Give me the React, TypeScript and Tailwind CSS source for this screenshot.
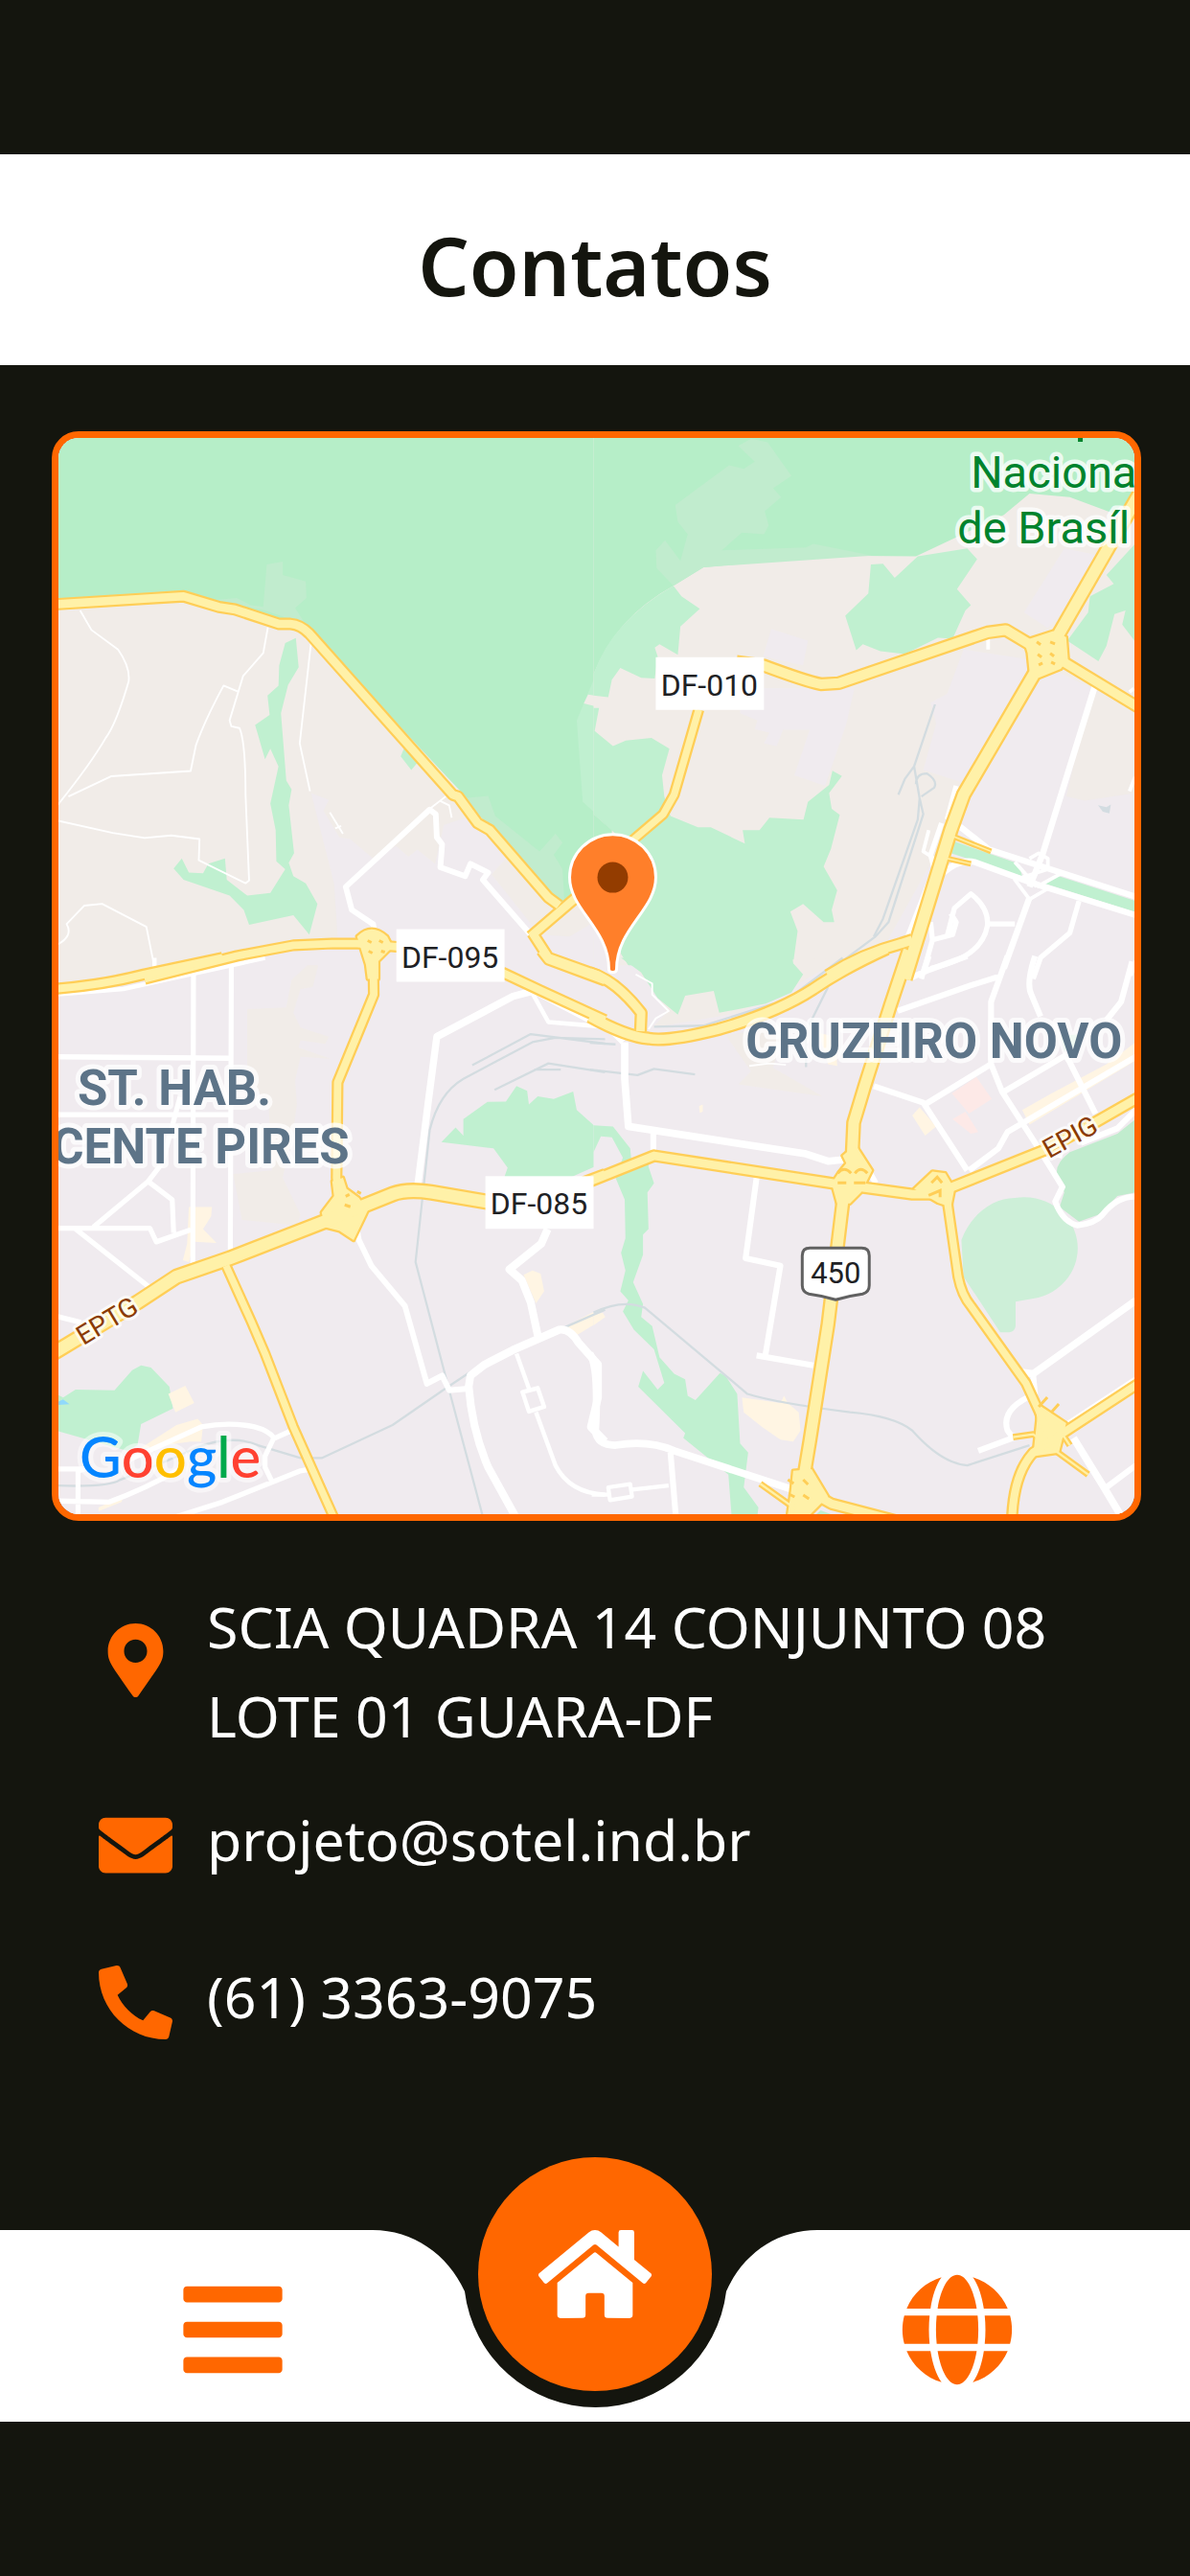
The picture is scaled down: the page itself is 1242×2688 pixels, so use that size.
import { FaBars, FaEnvelope, FaGlobe, FaHome, FaMapMarkerAlt, FaPhone } from "react-icons/fa";

type Shape = [string, string];
type Line = [number, string];

interface Tile {
    transform: string;
    areas: Shape[];
    rails: string;
    streets: Line[];
    roads: Line[];
    hubs: string;
}

const rural = "#f1ece8";
const urban = "#f0ebef";
const park = "#b6eec8";
const green = "#c0f0d0";
const grove = "#c1ecce";
const school = "#fff5e3";

const tiles: Tile[] = [
    {
        transform: "translate(-21 -27) scale(.37 .37)",
        areas: [
            [rural, "M50 50H1570V1570H50Z"],
            [urban, "M770 1075 820 1095 805 1125 850 1200 880 1205 945 1260 1010 1225 1045 1255 1070 1235 1120 1275 1145 1165 1220 1140 1320 1260 1280 1305 1415 1475 1500 1480 1568 1440V1570H300L560 1550 845 1480 835 1330Z"],
            [park, "M50 50H1570V1420L1500 1370 1470 1390 1220 1100 760 610 680 600 400 520 50 540Z"],
            [green, "M697 652 727 638 735 720 705 770 685 850 700 1040 715 1065 707 1110 722 1245 707 1272 720 1310 755 1330 788 1388 765 1475 720 1420 595 1447 580 1405 540 1365 410 1320 382 1288 405 1260 425 1300 465 1302 480 1275 527 1260 532 1320 590 1365 655 1357 697 1290 672 1268 670 1180 655 1105 678 1000 655 950 640 980 612 883 653 855 647 800 678 772 680 715ZM1032 950 1070 990 1053 1010 1023 972Z"],
            [grove, "M645 430 690 422V460L755 478 757 525 725 553 755 600 640 560 500 530 560 525 600 545 635 550ZM1200 1090 1270 1083 1290 1140 1415 1240 1460 1190 1480 1215 1455 1250 1480 1290 1485 1380 1440 1350Z"],
            [green, "M1520 870 1570 750V1130L1537 1100Z"],
            [rural, "M1540 822 1552 797 1570 800V830Z"],
        ],
        rails: "",
        streets: [
            [5, "M118 560 150 615 225 670Q260 720 255 760 220 880 190 920 150 990 50 1115M85 1085 205 1028 430 1013 445 940Q470 870 523 772L562 788M648 608 635 680 578 745 540 870 545 887 568 892Q585 930 585 1080L595 1322 585 1330 453 1265 455 1205 375 1195 300 1202 210 1188 50 1152M770 650 738 935 767 1070M823 1130 860 1190M838 1175 855 1168M50 1505Q100 1480 80 1445L130 1393 180 1388 305 1453 328 1568M1105 1120 1150 1085M1135 1098 1160 1110 1167 1145"],
            [16, "M948 1460 945 1445 885 1405 868 1340 1105 1122 1122 1135 1125 1200 1140 1220 1135 1285 1205 1310 1220 1275 1270 1300 1255 1320 1390 1475"],
        ],
        roads: [
            [32, "M40 543 330 525 410 520 510 550 555 557 680 598 712 598Q740 600 765 625L1170 1080 1185 1085 1240 1160 1275 1180 1440 1370 1470 1392"],
            [32, "M1390 1480 1530 1360M1395 1470 1440 1540 1580 1590"],
            [30, "M300 1600 560 1535 720 1505 830 1500 900 1500 1020 1510"],
        ],
        hubs: "M900 1480Q940 1440 985 1480L1000 1510 960 1550V1600H930L925 1560Z",
    },
    {
        transform: "translate(559 -27) scale(.3827 .37)",
        areas: [
            [rural, "M0 50H1480V1570H0Z"],
            [park, "M0 50H1480V250L1430 290 1300 240 1190 230 1120 290 880 407 650 405 300 438 218 490Q60 580 0 740Z"],
            [grove, "M395 95 430 75 475 85 540 180 490 215 512 240 467 280 478 320 465 345 405 340 350 390 580 382 600 372 760 405 300 438 218 490 172 440 170 390 195 362 237 420 257 345 230 310 223 262 370 150 410 160 440 140Z"],
            [green, "M218 490 240 520 290 555 237 605 230 685 180 655 167 665 175 690 167 752 130 750 73 722 50 755 40 805 0 800V740Q50 590 218 490ZM0 835H15L3 900 53 943 88 927 158 920 207 950 187 1025 193 1085 210 1140 285 1172H320L413 1218 407 1180H453L480 1145 573 1150 585 1100 643 1052 652 1012 678 1027 643 1075 650 1120 672 1137 648 1233 628 1283 665 1350 650 1405 657 1440H628L572 1388 537 1410 557 1465 543 1570H100L75 1530 40 1300 60 1190 0 1135Z"],
            [park, "M0 1135 50 1180V1300L0 1420Z"],
            [green, "M757 430 790 428 822 468 885 407 1020 385 1047 415 992 500 1030 545 1015 560 980 640 940 637 850 683 783 675 735 655 717 672 687 575 750 512ZM1480 370 1400 460 1420 485 1355 520 1350 565 1293 645 1378 703 1400 660 1422 570 1452 560 1443 600 1480 650Z"],
            [urban, "M0 1440 60 1570H0ZM485 612 585 645 572 715 463 690ZM400 780H712L690 880 632 1055 548 1025 590 897H517L500 943 465 935 480 905 440 895 447 870 400 850ZM1285 385 1360 400 1400 420 1240 610 1175 565ZM1010 670 1200 700 1360 780 1290 1085 1340 1097 1480 1075V1570H760L960 1200 975 1150 1005 1045 900 1010 935 880 920 820 965 795Z"],
            [green, "M985 1212 1160 1275 1170 1310 975 1245ZM1270 1310 1480 1380V1412L1230 1330Z"],
            ["#d3dce1", "M1377 1110 1400 1115 1412 1108 1408 1133 1390 1128Z"],
        ],
        rails: "M932 825 875 1000 890 1090 900 1135 805 1440 770 1480 640 1580M875 1000 850 1035 832 1080M890 1090 885 1150 790 1430 765 1480M880 1050Q880 1020 910 1020 940 1040 930 1060L895 1085",
        streets: [
            [17, "M1000 1170 1080 1235 1480 1368M955 1300Q1000 1260 1040 1270L1200 1330 1480 1420M1368 775 1225 1250 1190 1340M1190 1370 1120 1570"],
            [10, "M1150 1270 1210 1340M1190 1260 1215 1245 1240 1260V1290L1150 1320 1190 1375 1240 1345 1170 1310M1280 1300 1210 1340M915 1180 900 1240 930 1260M1475 780 1463 790M1077 640V670M1478 1030 1463 1070"],
            [14, "M950 1160 920 1250 930 1290 850 1500M990 1055 965 1150M920 1440 925 1490 980 1475 990 1440 975 1415M965 1480 985 1400 1030 1360Q1080 1400 1075 1450 1060 1540 920 1570M1080 1445H1150M895 1600 925 1490M1325 1380 1300 1470 1220 1540 1200 1600M1480 1550 1465 1590"],
        ],
        roads: [
            [36, "M390 705 463 715Q580 760 620 768L670 765 1075 622 1125 615 1190 655"],
            [28, "M287 840 220 1080 190 1135 105 1210"],
            [40, "M1490 230 1265 635"],
            [34, "M1275 700 1490 835"],
            [40, "M1205 735 1010 1080 975 1180 850 1600"],
            [34, "M640 1590Q730 1530 840 1500L870 1490"],
            [13, "M975 1195 1085 1240M965 1260 1030 1275"],
        ],
        hubs: "M1175 645 1255 618 1290 635 1295 700 1275 725 1215 750 1190 730 1185 680Z",
    },
    {
        transform: "translate(-21 543) scale(.37 .3827)",
        areas: [
            [urban, "M50 20H1570V1540H50Z"],
            [rural, "M50 0H520L420 20 170 70 50 85ZM590 140 700 135 715 60 760 20H790L775 80 740 85 720 150 740 190 820 215 810 235 740 225 735 245 825 275 740 270 725 335 730 400 720 470 690 600 740 700 730 730 575 715 550 590 660 580 650 400 590 330Z"],
            [green, "M1138 503 1178 463 1200 485V440L1268 393 1320 392 1350 350 1380 363 1385 400 1410 378 1455 385 1510 365 1520 415 1570 458V570L1500 600H1315L1325 573 1285 520ZM50 1190 70 1200 105 1178 215 1180 265 1125 290 1112 318 1118 370 1170 380 1230 290 1272 280 1330 250 1345 50 1290Z"],
            ["#90d9fb", "M55 1212 70 1205 88 1218 55 1220Z"],
            [school, "M425 680H490L488 705 465 740 503 778 440 775 425 830 408 825 420 780ZM1370 865 1395 853 1418 862 1428 910 1405 943ZM367 1190 415 1168 440 1215 387 1240ZM285 1340 390 1275 450 1258 465 1275 460 1320 430 1320ZM170 1500 240 1470 235 1485 170 1510ZM1480 1010 1570 965V1000L1520 1030Z"],
        ],
        rails: "M1225 293 1390 208 1600 234M1255 1525 1160 1180 1065 830 1105 470Q1130 370 1200 330L1395 230 1460 218 1600 222M1288 360 1440 288 1600 312M1400 305H1475M50 1440Q200 1445 230 1425 350 1380 450 1335 550 1300 620 1330L740 1365H800L1000 1275 1150 1175 1220 1130M1470 1015 1600 960",
        streets: [
            [14, "M438 40 436 840M545 10 542 800M50 270 540 274M50 428H540M50 738H315L333 775 430 742M400 380 350 560 310 610 155 735M310 610 378 660 382 750M105 740 315 900M50 978 120 995M50 1395H130L112 1400V1530M50 1482 200 1485Q300 1450 400 1395M255 1370 460 1280Q540 1265 610 1280 650 1290 665 1310L640 1360V1390L660 1430M665 1312 715 1290M390 1525 520 1485 740 1400 770 1395"],
            [20, "M1070 630 1100 400 1125 215 1340 105 1390 92"],
            [12, "M50 100 240 85 640 0M1390 88 1440 175 1600 188M1390 88 1600 195M328 0V30"],
            [16, "M895 720 905 770 940 840 1035 950 1097 1162 1140 1140 1160 1180 1220 1175"],
            [22, "M1350 1530 1270 1390Q1225 1290 1215 1170L1220 1140 1260 1110 1340 1070 1470 1015Q1500 1010 1525 1050L1580 1110V1200L1560 1280 1600 1320M1410 1030 1390 940 1365 880 1330 850 1420 780 1438 740"],
            [12, "M1350 1080 1385 1175M1367 1185 1410 1174 1428 1225 1385 1238ZM1405 1240 1460 1385Q1500 1460 1600 1465"],
        ],
        roads: [
            [30, "M40 85Q180 75 300 45L520 0"],
            [30, "M945 -20 947 100 845 340 842 600 850 660"],
            [42, "M40 1080 280 940 390 870 540 820 820 715 1000 645Q1040 630 1110 640L1280 668"],
            [28, "M530 840 600 990 640 1080 720 1280 840 1540"],
            [30, "M1310 40 1420 90 1600 170"],
            [30, "M1420 -20 1440 5 1600 62M1540 612 1600 590"],
        ],
        hubs: "M830 610 835 650 800 695 810 735 850 745 890 770 930 690 905 655 870 630 860 600Z",
    },
    {
        transform: "translate(559 543) scale(.3827 .3827)",
        areas: [
            [urban, "M0 20H1480V1540H0Z"],
            [rural, "M110 20 180 110 200 150 160 190 400 150 560 70 680 0ZM360 210 520 190 490 300 625 378 395 345 430 310Z"],
            [green, "M75 0 130 40 175 110 230 155 250 103 328 90 343 150 470 125 540 95 572 45 545 15 543 0ZM0 457 53 460 100 520 105 570 150 555 150 570 165 615 147 640 150 740 135 755V810L108 885 135 945 130 980 160 1005 180 1090 220 1135 250 1150 257 1195 278 1207 345 1133 360 1140 392 1190 400 1325 422 1350 410 1445 450 1500 445 1540H378L368 1410 245 1310 250 1297 122 1170 135 1127 175 1178 193 1160 165 1068 110 1015 80 965 95 935 73 910 87 853 75 805 87 765 85 660 60 600 80 545 50 490 20 487 0 530ZM600 1525 620 1508 680 1530Z"],
            ["#cdefd8", "M1004 770C1030 700 1090 655 1150 655A145 138 0 0 1 1200 930L1152 938V1005Q1150 1020 1135 1022H1110L1010 870Z"],
            [grove, "M1480 440 1430 480 1300 530Q1260 560 1265 590L1285 640 1272 680 1325 720 1380 700 1430 650 1480 640ZM1275 210H1320V240L1285 255Z"],
            [school, "M405 1200 510 1215 520 1195 530 1215 560 1240 565 1290 545 1320 510 1315 460 1280 410 1240ZM870 430 890 408 935 460 905 485ZM1170 415 1250 370 1400 290 1480 230V280L1190 455ZM0 975 25 968 32 980 0 1003ZM288 405 298 400V420L290 423ZM615 205 660 215 665 295 640 290Z"],
            ["#fde9e7", "M978 370 1045 325 1087 385 1025 425ZM980 440 1015 420 1050 475 1030 480Z"],
        ],
        rails: "M0 968Q80 930 140 955L420 1190Q500 1215 700 1240 820 1250 870 1290 950 1380 1020 1385L1190 1330M-10 232 60 236M-10 305 120 320 165 303 277 318M165 188 300 185 490 125M680 0 520 120M640 80 580 200V298",
        streets: [
            [20, "M85 230V330L95 460 580 535 640 555 690 550M-10 1080Q15 1120 5 1290 10 1330 60 1330 150 1315 220 1345L540 1450M1310 1310 1390 1440 1450 1540M1480 935 1200 1135 1160 1130"],
            [16, "M-10 140 80 230M163 480V525M445 600 415 820 510 840 468 1090M445 1085 600 1112M830 145 1030 75 1110 50M865 55 910 35 1020 -5M915 -5 900 40M1130 -5 1085 120V290L1115 365 1215 520 1280 625 1260 665Q1280 720 1320 730 1370 725 1390 700 1430 650 1480 652M1205 -5Q1180 70 1195 100L1220 160M1470 10 1440 120 1400 170M765 350 900 395 1020 580M905 400 1085 290M1025 580 1105 520 1130 475 1480 270M1120 365 1290 265 1370 425M1215 520 1280 540M1330 505 1430 465 1480 415M730 560Q750 575 770 615M210 1350 225 1530M1200 1140 1205 1190Q1110 1230 1130 1290L1145 1310 1050 1345M1480 1150 1290 1275 1265 1265M1400 1445 1480 1385"],
            [11, "M-5 1465H40M100 1452 205 1440M40 1445 100 1436 105 1470 45 1480Z"],
            [5, "M115 45 160 70V100L205 145 170 165 150 195M425 295 480 288 525 292"],
        ],
        roads: [
            [32, "M-10 40Q60 60 130 150L128 200"],
            [34, "M-10 160Q90 215 150 220 200 230 340 195 500 150 600 85 680 30 800 -25"],
            [38, "M860 -20 810 130 740 350 710 450 705 560 680 670 640 1000 590 1320 570 1440 560 1540"],
            [32, "M-10 610 165 540 650 615 870 645 930 645 1230 525 1350 460 1490 380"],
            [28, "M965 660 995 870Q1005 920 1030 950L1180 1160 1240 1290"],
            [30, "M1490 1160 1200 1350Q1145 1410 1142 1540"],
            [32, "M560 1440 650 1490 860 1545"],
            [15, "M455 1435 560 1510M1145 1308 1200 1300 1240 1330 1350 1410M1210 1230 1225 1330M1240 1240 1300 1330"],
        ],
        hubs: "M650 615 670 585 690 560 680 540 715 510 760 580 730 640 700 670H665ZM875 630 925 583 960 588 985 630 975 680 940 668ZM545 1400 595 1395 640 1470 590 1520H530L540 1450ZM1215 1220 1290 1270 1270 1350 1200 1360Z",
    },
];

const routes = [
    { label: "DF-010", x: 624, y: 229 },
    { label: "DF-095", x: 353, y: 513 },
    { label: "DF-085", x: 446, y: 771 },
];

function CityMap() {
    return (
        <svg viewBox="0 0 1124 1124" className="block w-full h-full" role="img" aria-label="Mapa" fontFamily="Roboto, sans-serif">
            <rect width="1124" height="1124" fill={urban} />
            {tiles.map((tile) => (
                <g key={tile.transform} transform={tile.transform}>
                    {tile.areas.map(([fill, d]) => <path key={d} d={d} fill={fill} />)}
                </g>
            ))}
            {tiles.map((tile) => (
                <g key={tile.transform} transform={tile.transform} fill="none" strokeLinejoin="round">
                    <path d={tile.rails} stroke="#d3dce0" strokeWidth="6" />
                    {tile.streets.map(([width, d]) => <path key={d} d={d} stroke="#fff" strokeWidth={width} />)}
                </g>
            ))}
            {tiles.map((tile) => (
                <g key={tile.transform} transform={tile.transform} fill="none" stroke="#ffce57" strokeLinejoin="round">
                    <path d={tile.hubs} strokeWidth="12" />
                    {tile.roads.map(([width, d]) => <path key={d} d={d} strokeWidth={width + 3} />)}
                </g>
            ))}
            {tiles.map((tile) => (
                <g key={tile.transform} transform={tile.transform} fill="none" stroke="#fff1a8" strokeLinejoin="round">
                    <path d={tile.hubs} fill="#fff1a8" stroke="none" />
                    {tile.roads.map(([width, d]) => <path key={d} d={d} strokeWidth={width - 9} />)}
                </g>
            ))}
            <g fill="none" stroke="#ffce57" strokeWidth="3">
                {/* interchange loops */}
                <path d="M1022 213l4 3m10-3l5 2m-18 11l4 3m9-4l4 3m-16 9l4-2m9-1l4 2" />
                <path d="M323 525l4 2m8-2l4 2m-15 9l4 2m9-2l4 1m-41 255l4-2m8-3l4 2m-17 12l6 2" />
                <path d="M814 768q7-8 14 0m4 0q6-8 13 0m-31 10h9m8 0h12M912 778l6-6 5 6m-14 13l12-5v7M762 1088l6 4m10-4l5 5m-20 10l6 3m9-2l6 4m240-96l9-10m4 16l8-9" />
            </g>

            {routes.map(({ label, x, y }) => (
                <g key={label}>
                    <rect x={x} y={y} width="113" height="55" fill="#fff" />
                    <text x={x + 56} y={y + 40} textAnchor="middle" fontSize="32" fill="#202124">{label}</text>
                </g>
            ))}
            <path d="M785 846h54q8 0 8 8v31q0 7-7 9-15 2-28 6-13-4-28-6-7-2-7-9v-31q0-8 8-8Z" fill="#fff" stroke="#616161" strokeWidth="3" />
            <text x="812" y="883" textAnchor="middle" fontSize="31" fill="#202124">450</text>

            <g paintOrder="stroke" stroke="#fff" strokeOpacity=".75" strokeLinejoin="round">
                <g strokeWidth="10" fontSize="51" fontWeight="700" fill="#5d7488">
                    <text x="20" y="697">ST. HAB.</text>
                    <text x="304" y="758" textAnchor="end">CENTE PIRES</text>
                    <text x="718" y="648">CRUZEIRO NOVO</text>
                </g>
                <g strokeWidth="9" fontSize="47" fill="#00832d">
                    <text x="953" y="52">Naciona</text>
                    <text x="939" y="110">de Brasíl</text>
                </g>
                <g strokeWidth="6" fontSize="28" fill="#8a3a00">
                    <text transform="translate(26 948) rotate(-31)">EPTG</text>
                    <text transform="translate(1035 753) rotate(-29)">EPIG</text>
                </g>
                <text x="22" y="1086" fontSize="60" strokeWidth="10" strokeOpacity=".5" fontFamily="Lato, sans-serif" fontWeight="500">
                    <tspan fill="#0585ff">G</tspan>
                    <tspan fill="#ff4131">o</tspan>
                    <tspan fill="#ffbf00">o</tspan>
                    <tspan fill="#0585ff">g</tspan>
                    <tspan fill="#00a94b">l</tspan>
                    <tspan fill="#ff4131">e</tspan>
                </text>
            </g>
            <path d="M1065 0h5v4h-5z" fill="#00832d" />

            <path d="M579 414a45 45 0 0 0-45 45c0 34 41 53 41 96q0 3 4 3t4-3c0-43 41-62 41-96a45 45 0 0 0-45-45Z" fill="#ff7f2a" stroke="#fff" strokeWidth="3" />
            <circle cx="579" cy="459" r="16" fill="#933c00" />
        </svg>
    );
}

export default function ContactsPage() {
    return (
        <div className="min-h-screen w-full flex flex-col bg-[#14150e] text-white py-[161px] font-[Noto_Sans,sans-serif]">
            <header className="h-[220px] pt-3 bg-white flex items-center justify-center">
                <h1 className="text-[#14150e] text-[84px] leading-none font-semibold">Contatos</h1>
            </header>

            <main className="flex-1 pt-[69px]">
                <div className="ml-[54px] mr-[51px] aspect-square border-7 border-[#ff6700] rounded-[28px] overflow-hidden">
                    <CityMap />
                </div>

                <address className="mt-16 pl-[103px] pr-12 not-italic text-[59px] leading-[93px]">
                    <div className="flex items-center gap-9">
                        <FaMapMarkerAlt size={77} className="shrink-0 mb-6 text-[#ff6700]" />
                        <p>SCIA QUADRA 14 CONJUNTO 08<br />LOTE 01 GUARA-DF</p>
                    </div>
                    <div className="flex items-center gap-9 h-[164px]">
                        <FaEnvelope size={77} className="shrink-0 mt-3 text-[#ff6700]" />
                        <a href="mailto:projeto@sotel.ind.br">projeto@sotel.ind.br</a>
                    </div>
                    <div className="flex items-center gap-9 h-[164px]">
                        <FaPhone size={77} className="shrink-0 mt-3 text-[#ff6700] -scale-x-100" />
                        <a href="tel:+556133639075">(61) 3363-9075</a>
                    </div>
                </address>
            </main>

            <nav className="flex h-[200px] text-[#ff6700]">
                <div className="flex-1 bg-white flex items-center justify-end pt-2 pr-[87px]">
                    <button type="button" aria-label="Menu"><FaBars size={118} /></button>
                </div>
                <div className="relative w-[464px] shrink-0">
                    <svg viewBox="0 0 464 200" className="block w-full h-full" aria-hidden="true">
                        <path d="M0 0C42 0 78 25 96 64A137.5 137.5 0 0 0 369 64C386 25 422 0 464 0V200H0Z" fill="#fff" />
                    </svg>
                    <button type="button" aria-label="Início" className="absolute -top-[76px] left-1/2 -translate-x-1/2 size-[244px] rounded-full bg-[#ff6700] text-white flex items-center justify-center">
                        <FaHome size={118} />
                    </button>
                </div>
                <div className="flex-1 bg-white flex items-center pt-2 pl-[87px]">
                    <button type="button" aria-label="Site"><FaGlobe size={118} /></button>
                </div>
            </nav>
        </div>
    );
}
